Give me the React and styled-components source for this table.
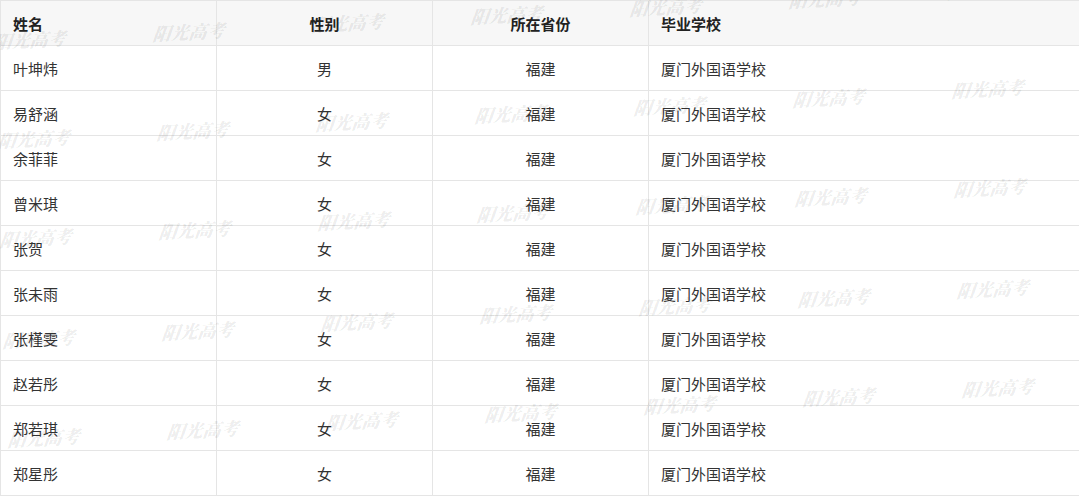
import React from 'react'
import styled, { createGlobalStyle } from 'styled-components'

const GlobalStyle = createGlobalStyle`
  html, body {
    margin: 0;
    padding: 0;
    background: #fff;
  }
  body {
    font-family: "Noto Sans CJK SC", "Noto Sans", sans-serif;
    color: #333;
  }
`

const Wrap = styled.div`
  position: relative;
  width: 1079px;
  overflow: hidden;
`

const Table = styled.table`
  width: 100%;
  border-collapse: collapse;
  table-layout: fixed;
  font-size: 15px;
`

const HeadCell = styled.th`
  height: 45px;
  padding: 0 12px;
  background: #f7f7f7;
  border: 1px solid #e5e5e5;
  font-weight: 700;
  color: #222;
  text-align: ${(p) => (p.$center ? 'center' : 'left')};
  width: ${(p) => p.$w}px;
  box-sizing: border-box;
`

const Cell = styled.td`
  height: 45px;
  padding: 0 12px;
  border: 1px solid #e5e5e5;
  color: #333;
  text-align: ${(p) => (p.$center ? 'center' : 'left')};
  box-sizing: border-box;
`

const MarkLayer = styled.div`
  position: absolute;
  inset: 0;
  pointer-events: none;
`

const Mark = styled.span`
  position: absolute;
  font-family: "Noto Serif CJK SC", "Noto Sans CJK SC", serif;
  font-size: 18px;
  font-weight: 900;
  font-style: italic;
  color: rgba(0, 0, 0, 0.085);
  white-space: nowrap;
  transform: rotate(-3deg) skewX(-10deg);
  transform-origin: left center;
`

const columns = [
  { title: '姓名', w: 216 },
  { title: '性别', w: 216, center: true },
  { title: '所在省份', w: 216, center: true },
  { title: '毕业学校', w: 431 },
]

const people = [
  ['叶坤炜', '男'],
  ['易舒涵', '女'],
  ['余菲菲', '女'],
  ['曾米琪', '女'],
  ['张贺', '女'],
  ['张未雨', '女'],
  ['张槿雯', '女'],
  ['赵若彤', '女'],
  ['郑若琪', '女'],
  ['郑星彤', '女'],
]

// watermark rows: start x / y, each step goes right ~159 and up ~8
const markRows = [
  [-6, 28],
  [-2, 127],
  [0, 226],
  [3, 327],
  [8, 426],
]

const App = () => {
  const marks = []
  markRows.forEach(([x0, y0], r) => {
    for (let i = 0; i < 7; i++) {
      marks.push({ key: `${r}-${i}`, x: x0 + i * 159, y: y0 - i * 8.3 })
    }
  })

  return (
    <>
      <GlobalStyle />
      <Wrap>
        <Table>
          <thead>
            <tr>
              {columns.map((c) => (
                <HeadCell key={c.title} $w={c.w} $center={c.center}>
                  {c.title}
                </HeadCell>
              ))}
            </tr>
          </thead>
          <tbody>
            {people.map(([name, sex]) => (
              <tr key={name}>
                <Cell>{name}</Cell>
                <Cell $center>{sex}</Cell>
                <Cell $center>福建</Cell>
                <Cell>厦门外国语学校</Cell>
              </tr>
            ))}
          </tbody>
        </Table>
        <MarkLayer>
          {marks.map((m) => (
            <Mark key={m.key} style={{ left: m.x, top: m.y }}>
              阳光高考
            </Mark>
          ))}
        </MarkLayer>
      </Wrap>
    </>
  )
}

export default App
